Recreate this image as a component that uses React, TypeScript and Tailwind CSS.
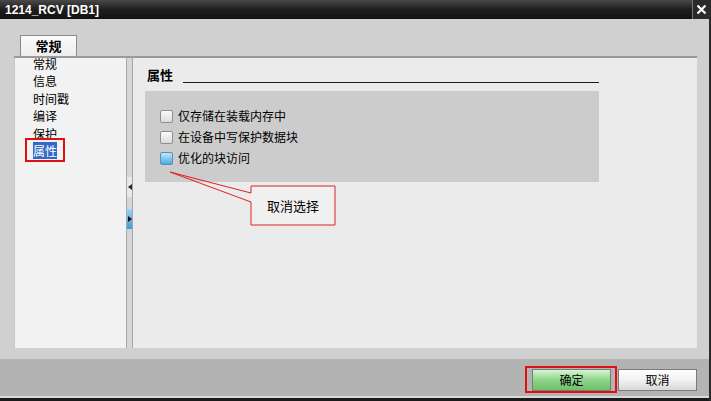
import React from "react";

const cjk = { fontFamily: '"Noto Sans CJK SC", "Noto Sans", sans-serif' };

function Checkbox({ checked }: { checked?: boolean }) {
  return checked ? (
    <span className="w-[13px] h-[13px] rounded-[2px] border border-[#5a8fb8] bg-linear-to-b from-[#bfe6fb] to-[#4aa8e0] shrink-0" />
  ) : (
    <span className="w-[13px] h-[13px] rounded-[2px] border border-[#8e8e8e] bg-linear-to-b from-[#fafafa] to-[#dcdcdc] shrink-0" />
  );
}

export default function App() {
  const nav = ["常规", "信息", "时间戳", "编译", "保护"];
  const opts = [
    { t: "仅存储在装载内存中", c: false },
    { t: "在设备中写保护数据块", c: false },
    { t: "优化的块访问", c: true },
  ];
  return (
    <div className="w-[711px] h-[401px] flex flex-col bg-[#d0d0d0] border-r-2 border-[#2a2a2a] overflow-hidden" style={cjk}>
      {/* title bar */}
      <div className="h-[19px] flex items-center justify-between bg-linear-to-b from-[#4a4a4a] via-[#1e1e1e] to-[#111111] shrink-0">
        <span className="pl-[5px] text-white font-bold text-[12px] leading-none" style={{ fontFamily: '"Liberation Sans", sans-serif' }}>
          1214_RCV [DB1]
        </span>
        <span className="w-[17px] h-[19px] border-l border-[#777] bg-[#2a2a2a] flex items-center justify-center">
          <svg width="11" height="11" viewBox="0 0 11 11">
            <path d="M1.5 1.5 L9.5 9.5 M9.5 1.5 L1.5 9.5" stroke="#fff" strokeWidth="2.2" />
          </svg>
        </span>
      </div>

      {/* body */}
      <div className="flex-1 flex flex-col pl-[14px] pr-[12px] pt-[16px]">
        {/* tab row */}
        <div className="flex pl-[6px] h-[21px]">
          <div className="w-[57px] h-[21px] bg-linear-to-b from-[#fbfbfb] to-[#ededed] border border-b-0 border-[#8a8a8a] flex items-center justify-center font-bold text-[13px] text-black">
            常规
          </div>
        </div>
        {/* content panel */}
        <div className="h-[292px] flex border-t-2 border-[#9a9a9a]">
          {/* nav */}
          <div className="w-[112px] bg-[#f2f2f2] border-l border-[#c8c8c8] pl-[18px] text-[12px] text-black">
            <div className="-mt-[3px]">
              {nav.map((n) => (
                <div key={n} className="h-[17.4px] leading-[17.4px]">{n}</div>
              ))}
              <div className="h-[17.4px] leading-[17.4px] relative">
                <span className="bg-[#3169c6] text-white">属性</span>
                <span className="absolute left-[-8px] top-[-4px] w-[40px] h-[24px] border-2 border-[#e01010]" />
              </div>
            </div>
          </div>
          {/* splitter */}
          <div className="w-[7px] bg-[#d6d6d6] border-l border-r border-[#a8a8a8] flex flex-col pt-[119px]">
            <div className="h-[20px] bg-[#e8e8e8] flex items-center justify-center">
              <svg width="4" height="6" viewBox="0 0 4 6"><path d="M4 0 L0 3 L4 6 Z" fill="#222" /></svg>
            </div>
            <div className="h-[12px]" />
            <div className="h-[20px] bg-linear-to-b from-[#9fd3f5] to-[#3d98d8] flex items-center justify-center">
              <svg width="4" height="6" viewBox="0 0 4 6"><path d="M0 0 L4 3 L0 6 Z" fill="#111" /></svg>
            </div>
          </div>
          {/* right panel */}
          <div className="flex-1 bg-[#ebebeb] pl-[12px] pt-[7px] relative">
            <div className="flex items-end h-[16px] pl-[2px] w-[454px]">
              <span className="font-bold text-[13px] leading-none text-black">属性</span>
              <span className="flex-1 ml-[10px] mb-[-2px] h-[1px] bg-[#1a1a1a]" />
            </div>
            <div className="mt-[10px] w-[454px] h-[91px] bg-[#cccccc] pl-[15px] pt-[19px] flex flex-col gap-[9px]">
              {opts.map((o) => (
                <div key={o.t} className="flex items-center gap-[5px] h-[12px] text-[12px] text-black">
                  <Checkbox checked={o.c} />
                  <span className="leading-none">{o.t}</span>
                </div>
              ))}
            </div>
            {/* callout */}
            <svg className="absolute left-0 top-0 pointer-events-none" width="564" height="292" viewBox="0 0 564 292">
              <rect x="118" y="128" width="84" height="39" fill="#f0f0f0" />
              <path d="M118 135 L118 128 L202 128 L202 167 L118 167 L118 144" fill="none" stroke="#e02020" strokeWidth="1" />
              <path d="M37 114 L118 135 M37 114 L118 144" fill="none" stroke="#e02020" strokeWidth="1" />
            </svg>
            <div className="absolute left-[118px] top-[128px] w-[84px] h-[39px] flex items-center justify-center text-[13px] text-black">
              取消选择
            </div>
          </div>
        </div>
        <div className="h-[11px]" />
      </div>

      {/* bottom bar */}
      <div className="h-[37px] bg-[#b3b3b3] flex justify-end items-start pt-[10px] pr-[12px] gap-[7px] shrink-0">
        <div className="relative">
          <div className="w-[79px] h-[22px] border border-[#7a7a7a] bg-linear-to-b from-[#d6f5cf] via-[#8fd48a] to-[#6cc06a] flex items-center justify-center text-[12px] text-black">
            确定
          </div>
          <span className="absolute left-[-7px] top-[-3px] w-[92px] h-[27px] border-2 border-[#e01010]" />
        </div>
        <div className="w-[79px] h-[22px] border border-[#7a7a7a] bg-linear-to-b from-[#ffffff] via-[#f2f2f2] to-[#d8d8d8] flex items-center justify-center text-[12px] text-black">
          取消
        </div>
      </div>
      <div className="h-[2px] bg-[#d8d8d8] shrink-0" />
      <div className="h-[4px] bg-[#1a1a1a] shrink-0" />
    </div>
  );
}
